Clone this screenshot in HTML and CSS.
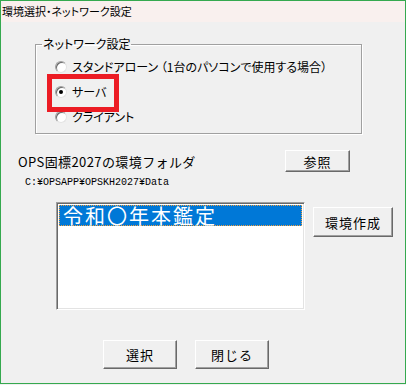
FILE: index.html
```html
<!DOCTYPE html>
<html lang="ja">
<head>
    <meta charset="UTF-8">
    <title>環境選択・ネットワーク設定</title>
    <link rel="stylesheet" href="styles.css">
</head>
<body>
    <div class="window">
        <div class="titlebar">環境選択・ネットワーク設定</div>

        <!-- ネットワーク設定 -->
        <fieldset class="group">
            <legend>ネットワーク設定</legend>
            <div class="option"><span class="radio"></span><span class="caption">スタンドアローン （1台のパソコンで使用する場合）</span></div>
            <div class="option"><span class="radio checked"></span><span class="caption">サーバ</span></div>
            <div class="option"><span class="radio"></span><span class="caption">クライアント</span></div>
        </fieldset>
        <div class="highlight"></div>

        <!-- 環境フォルダ -->
        <div class="folder-row">
            <span class="folder-label">OPS固標2027の環境フォルダ</span>
            <button class="btn btn-browse">参照</button>
        </div>
        <div class="path">C:¥OPSAPP¥OPSKH2027¥Data</div>

        <div class="list-row">
            <div class="listbox">
                <div class="item selected">令和〇年本鑑定</div>
            </div>
            <button class="btn btn-create">環境作成</button>
        </div>

        <div class="footer">
            <button class="btn btn-main">選択</button>
            <button class="btn btn-main">閉じる</button>
        </div>
    </div>
</body>
</html>
```

FILE: styles.css
```css
body {
    margin: 0;
    background-color: #f0f0f0;
    font-family: "Noto Sans CJK JP", "Liberation Sans", sans-serif;
    color: #000;
}
.window {
    position: relative;
    width: 406px;
    height: 384px;
    box-sizing: border-box;
    border: 1px solid #35a94f;
    background-color: #f0f0f0;
}
.titlebar {
    height: 21px;
    line-height: 21px;
    padding-left: 1px;
    font-size: 11px;
    font-feature-settings: "palt";
    background-color: #f9f0ee;
}
.group {
    margin: 15px 0 0 34px;
    width: 327px;
    height: 97px;
    box-sizing: border-box;
    padding: 3px 0 0 19px;
    border: 1px solid #a0a0a0;
    box-shadow: 1px 1px 0 #fff, inset 1px 1px 0 #fff;
}
.group legend {
    margin-left: -13px;
    padding: 0 1px;
    font-size: 12px;
    line-height: 14px;
    font-feature-settings: "palt";
}
.option {
    display: flex;
    align-items: center;
    height: 25px;
    gap: 5px;
}
.caption {
    font-size: 12px;
    font-feature-settings: "palt";
}
.radio {
    position: relative;
    width: 12px;
    height: 12px;
    box-sizing: border-box;
    border-radius: 50%;
    background: #fff;
    border: 1px solid;
    border-color: #a0a0a0 #e3e3e3 #e3e3e3 #a0a0a0;
    box-shadow: inset 1px 1px 0 #696969;
}
.radio.checked::after {
    content: "";
    position: absolute;
    left: 3px;
    top: 3px;
    width: 4px;
    height: 4px;
    border-radius: 50%;
    background: #000;
}
.highlight {
    position: absolute;
    left: 46px;
    top: 73px;
    width: 72px;
    height: 38px;
    box-sizing: border-box;
    border: 5px solid #ec1c24;
}
.folder-row {
    display: flex;
    align-items: center;
    justify-content: space-between;
    margin: 16px 55px 0 17px;
}
.folder-label {
    font-size: 13px;
    letter-spacing: 0.4px;
}
.btn {
    box-sizing: border-box;
    margin: 0;
    padding: 0;
    font-family: "Noto Sans CJK JP", sans-serif;
    font-size: 13px;
    letter-spacing: 1px;
    color: #000;
    background-color: #f0f0f0;
    border: 1px solid;
    border-color: #fff #696969 #696969 #fff;
    box-shadow: inset -1px -1px 0 #a0a0a0;
    border-radius: 0;
}
.btn-browse {
    width: 65px;
    height: 22px;
}
.path {
    margin: 5px 0 0 24px;
    font-family: "Liberation Mono", monospace;
    font-size: 10px;
    line-height: 12px;
}
.list-row {
    display: flex;
    align-items: flex-start;
    gap: 8px;
    margin: 13px 0 0 55px;
}
.listbox {
    width: 249px;
    height: 108px;
    box-sizing: border-box;
    background: #fff;
    border: 1px solid;
    border-color: #a0a0a0 #fff #fff #a0a0a0;
    box-shadow: inset 1px 1px 0 #696969, inset -1px -1px 0 #e3e3e3;
    padding: 2px 2px 0 2px;
}
.item {
    height: 21px;
    line-height: 20px;
    box-sizing: border-box;
    padding-left: 3px;
    font-size: 20px;
    letter-spacing: 2px;
}
.item.selected {
    background-color: #0078d7;
    color: #fff;
    border: 1px dotted #f0a040;
}
.btn-create {
    margin-top: 5px;
    width: 80px;
    height: 30px;
}
.footer {
    display: flex;
    gap: 18px;
    margin: 30px 0 0 102px;
}
.btn-main {
    width: 74px;
    height: 29px;
}
```
